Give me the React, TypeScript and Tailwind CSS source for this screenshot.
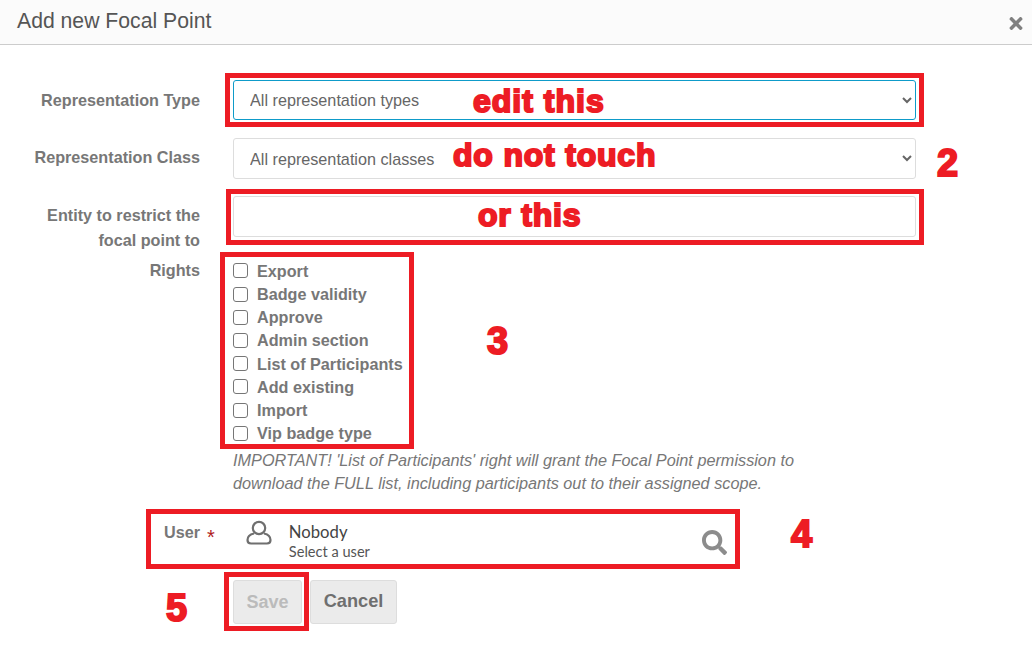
import { FaSearch, FaTimes } from "react-icons/fa";

const rights = ["Export", "Badge validity", "Approve", "Admin section", "List of Participants", "Add existing", "Import", "Vip badge type"];

const labelClass = "w-[200px] shrink-0 text-right text-[16.2px] font-bold leading-[25px] text-[#777777]";
const selectClass = "block w-[683px] rounded-[3px] bg-white pl-[12px] text-[16.2px] text-[#666666] outline-none";
const noteClass = "absolute font-['Liberation_Sans',sans-serif] font-bold text-[#ed1c24] [-webkit-text-stroke:2px_#ed1c24] whitespace-nowrap";
const boxClass = "absolute border-[5px] border-[#ed1c24] pointer-events-none";
const phraseClass = "text-[32px] leading-[36px] tracking-[0.8px]";
const digitClass = "text-[38px] leading-[40px]";

export default function App() {
  return (
    <div className="relative h-[646px] w-[1032px] overflow-hidden bg-white font-['Liberation_Sans',sans-serif]">
      <header className="flex h-[45px] items-center justify-between border-b border-[#cccccc] bg-[#fbfbfb] pl-[17px] pr-[8px]">
        <h1 className="pb-[2px] text-[21.2px] leading-none text-[#555555]">Add new Focal Point</h1>
        <FaTimes className="mt-[3px] h-[19px] w-[16px] text-[#808080]" />
      </header>

      <form className="pt-[35px]">
        <div className="flex gap-[33px]">
          <label className={`${labelClass} pt-[8px]`}>Representation Type</label>
          <select className={`${selectClass} h-[40px] border border-[#0e9bc9]`}>
            <option>All representation types</option>
          </select>
        </div>

        <div className="mt-[18px] flex gap-[33px]">
          <label className={`${labelClass} pt-[7px]`}>Representation Class</label>
          <select className={`${selectClass} h-[41px] border border-[#dddddd]`}>
            <option>All representation classes</option>
          </select>
        </div>

        <div className="mt-[17px] flex gap-[33px]">
          <label className={`${labelClass} pt-[7px]`}>Entity to restrict the<br />focal point to</label>
          <input className="block h-[41px] w-[683px] rounded-[3px] border border-[#dddddd] bg-white" />
        </div>

        <div className="flex gap-[33px]">
          <label className={`${labelClass} pt-[5px]`}>Rights</label>
          <div className="pt-[6.4px]">
            <ul className="flex flex-col">
              {rights.map((r) => (
                <li key={r} className="flex h-[23.2px] items-center gap-[9px] text-[16.2px] font-bold text-[#777777]">
                  <input type="checkbox" className="h-[15px] w-[15px] appearance-none rounded-[3px] border-[1.5px] border-[#767676] bg-white" />
                  <span>{r}</span>
                </li>
              ))}
            </ul>
            <p className="mt-[4.6px] w-[600px] text-[16.25px] italic leading-[23px] text-[#777777]">
              IMPORTANT! 'List of Participants' right will grant the Focal Point permission to<br />download the FULL list, including participants out to their assigned scope.
            </p>
          </div>
        </div>

        <div className="mt-[25px] flex h-[50px] w-[739px] pl-[164px]">
          <span className="pt-[4px] text-[16.2px] font-bold leading-[17px] text-[#777777]">User</span>
          <span className="ml-[7px] pt-[7px] text-[20px] leading-[20px] text-[#b01c1c]">*</span>
          <svg viewBox="0 0 26 26" fill="none" stroke="#6f6f6f" strokeWidth="2.2" className="ml-[31px] h-[26px] w-[26px]">
            <circle cx="13" cy="8" r="6.2" />
            <path d="M8 13.5 C3.5 14.5 1.5 17 1.5 20 C1.5 22.2 3 23.5 5 23.5 H21 C23 23.5 24.5 22.2 24.5 20 C24.5 17 22.5 14.5 18 13.5" />
          </svg>
          <div className="ml-[17px] flex-1 pt-[2px]">
            <div className="text-[16.7px] leading-[21px] text-[#444444] font-['Lato',sans-serif]">Nobody</div>
            <div className="text-[14.6px] leading-[18px] text-[#555555] font-['Lato',sans-serif]">Select a user</div>
          </div>
          <FaSearch className="mr-[12px] mt-[10px] h-[25px] w-[25px] text-[#8c8c8c]" />
        </div>

        <div className="mt-[9.6px] flex gap-[8px] pl-[233px]">
          <button type="button" disabled className="h-[44px] w-[69px] rounded-[3px] border border-[#dddddd] bg-[#ebebeb] text-[18px] font-bold text-[#bbbbbb]">Save</button>
          <button type="button" className="h-[44px] w-[87px] rounded-[3px] border border-[#dddddd] bg-[#ebebeb] text-[18.2px] font-bold text-[#6f6f6f]">Cancel</button>
        </div>
      </form>

      <div className={`${boxClass} left-[225px] top-[73px] h-[54px] w-[699px]`} />
      <div className={`${boxClass} left-[226px] top-[189px] h-[56px] w-[698px]`} />
      <div className={`${boxClass} left-[220px] top-[252px] h-[197px] w-[194px]`} />
      <div className={`${boxClass} left-[146px] top-[509px] h-[60px] w-[594px]`} />
      <div className={`${boxClass} left-[224px] top-[572px] h-[59px] w-[85px]`} />

      <span className={`${noteClass} ${phraseClass} left-[473px] top-[83px] tracking-[1px]`}>edit this</span>
      <span className={`${noteClass} ${phraseClass} left-[453px] top-[137px] tracking-[0.6px]`}>do not touch</span>
      <span className={`${noteClass} ${phraseClass} left-[478px] top-[197px] tracking-[0.6px]`}>or this</span>
      <span className={`${noteClass} ${digitClass} left-[937px] top-[143px]`}>2</span>
      <span className={`${noteClass} ${digitClass} left-[487px] top-[321px]`}>3</span>
      <span className={`${noteClass} ${digitClass} left-[791px] top-[514px]`}>4</span>
      <span className={`${noteClass} ${digitClass} left-[166px] top-[588px]`}>5</span>
    </div>
  );
}
